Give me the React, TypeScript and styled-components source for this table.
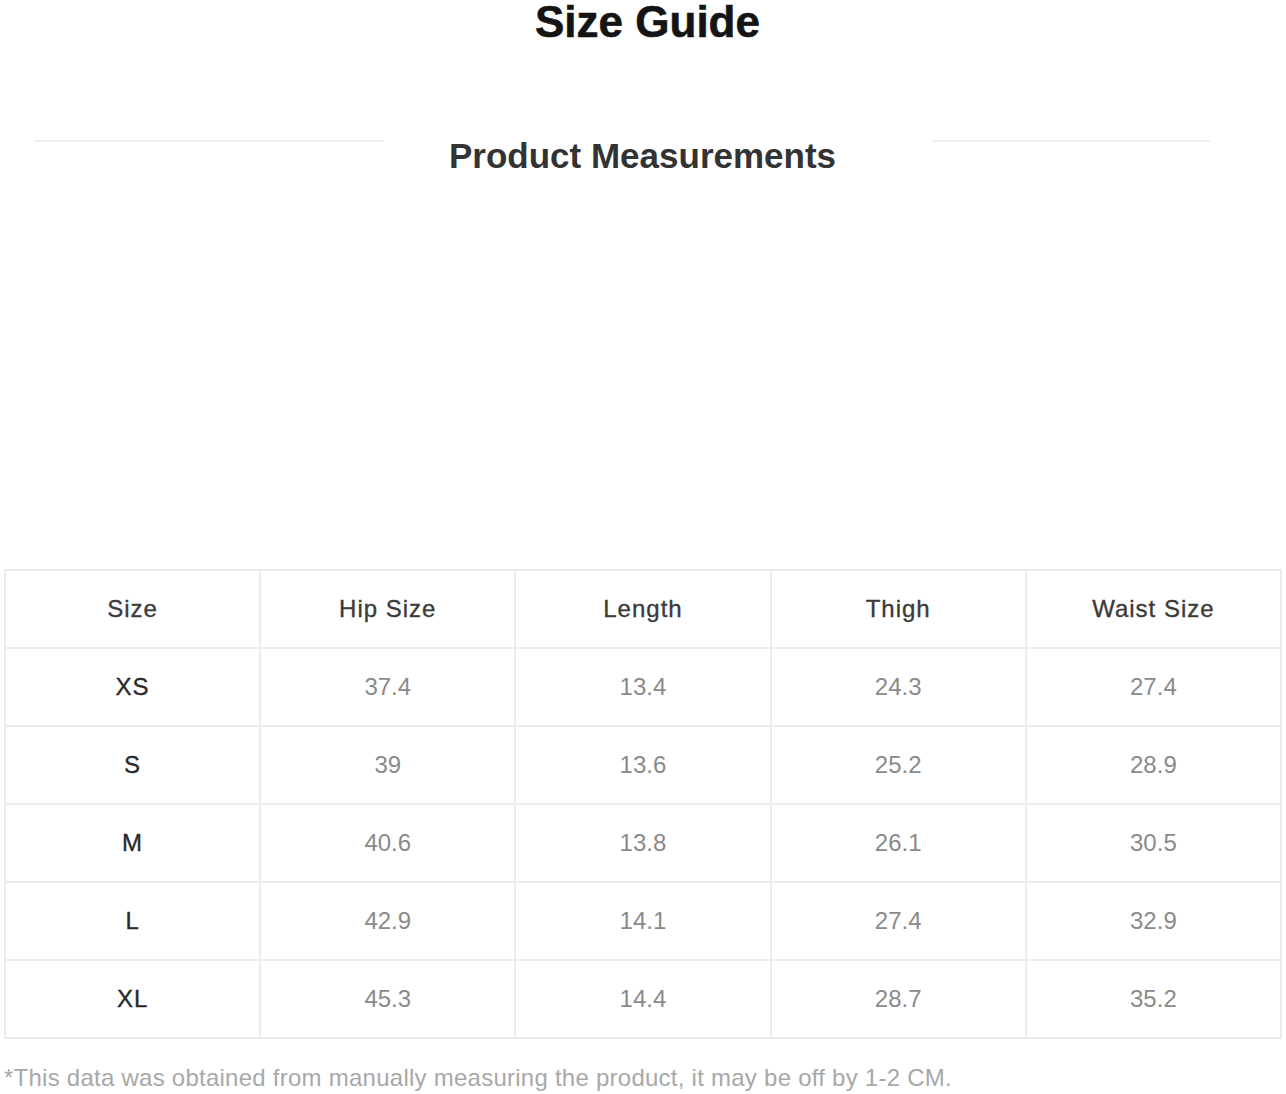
import React from 'react'
import styled, { createGlobalStyle } from 'styled-components'

const GlobalStyle = createGlobalStyle`
  html, body {
    margin: 0;
    padding: 0;
    background: #fff;
  }
  body {
    font-family: 'Liberation Sans', Arial, sans-serif;
  }
`

const Page = styled.div`
  width: 1286px;
  padding: 0 4px;
  box-sizing: border-box;
`

const Title = styled.h1`
  margin: 0;
  padding-left: 9px;
  font-size: 44px;
  line-height: 44px;
  font-weight: 700;
  text-align: center;
  color: #141414;
  -webkit-text-stroke: 0.6px #141414;
`

const SectionHead = styled.div`
  display: flex;
  align-items: center;
  margin-top: 92px;
  padding-left: 30px;
`

const Rule = styled.span<{ $width: number; $gap: number; $side: 'left' | 'right' }>`
  flex: none;
  width: ${({ $width }) => $width}px;
  height: 2px;
  margin-top: -30px;
  background: #f0f0f0;
  ${({ $side, $gap }) => ($side === 'left' ? `margin-right: ${$gap}px;` : `margin-left: ${$gap}px;`)}
`

const SectionTitle = styled.h2`
  margin: 0;
  font-size: 35px;
  line-height: 40px;
  font-weight: 700;
  color: #333;
  white-space: nowrap;
`

const Table = styled.table`
  width: 1278px;
  margin-top: 393px;
  border-collapse: collapse;
  table-layout: fixed;
`

const Cell = styled.td<{ $kind: 'head' | 'size' | 'value' }>`
  height: 76px;
  padding: 0;
  border: 2px solid #ececec;
  text-align: center;
  vertical-align: middle;
  font-size: 24px;
  line-height: 24px;
  color: ${({ $kind }) => ($kind === 'value' ? '#8a8a8a' : $kind === 'size' ? '#2a2a2a' : '#3a3a3a')};
  letter-spacing: ${({ $kind }) => ($kind === 'value' ? '0' : '1px')};
  -webkit-text-stroke: ${({ $kind }) => ($kind === 'value' ? '0' : '0.35px')};
`

const Note = styled.p`
  margin: 25px 0 0;
  font-size: 24px;
  line-height: 28px;
  color: #a8a8a8;
  letter-spacing: 0.25px;
`

const headers = ['Size', 'Hip Size', 'Length', 'Thigh', 'Waist Size']

const rows: [string, string, string, string, string][] = [
  ['XS', '37.4', '13.4', '24.3', '27.4'],
  ['S', '39', '13.6', '25.2', '28.9'],
  ['M', '40.6', '13.8', '26.1', '30.5'],
  ['L', '42.9', '14.1', '27.4', '32.9'],
  ['XL', '45.3', '14.4', '28.7', '35.2'],
]

export default function App() {
  return (
    <>
      <GlobalStyle />
      <Page>
        <Title>Size Guide</Title>
        <SectionHead>
          <Rule $side="left" $width={349} $gap={66} />
          <SectionTitle>Product Measurements</SectionTitle>
          <Rule $side="right" $width={278} $gap={96} />
        </SectionHead>
        <Table>
          <tbody>
            <tr>
              {headers.map((h) => (
                <Cell key={h} $kind="head">
                  {h}
                </Cell>
              ))}
            </tr>
            {rows.map((r) => (
              <tr key={r[0]}>
                {r.map((v, i) => (
                  <Cell key={i} $kind={i === 0 ? 'size' : 'value'}>
                    {v}
                  </Cell>
                ))}
              </tr>
            ))}
          </tbody>
        </Table>
        <Note>*This data was obtained from manually measuring the product, it may be off by 1-2 CM.</Note>
      </Page>
    </>
  )
}
